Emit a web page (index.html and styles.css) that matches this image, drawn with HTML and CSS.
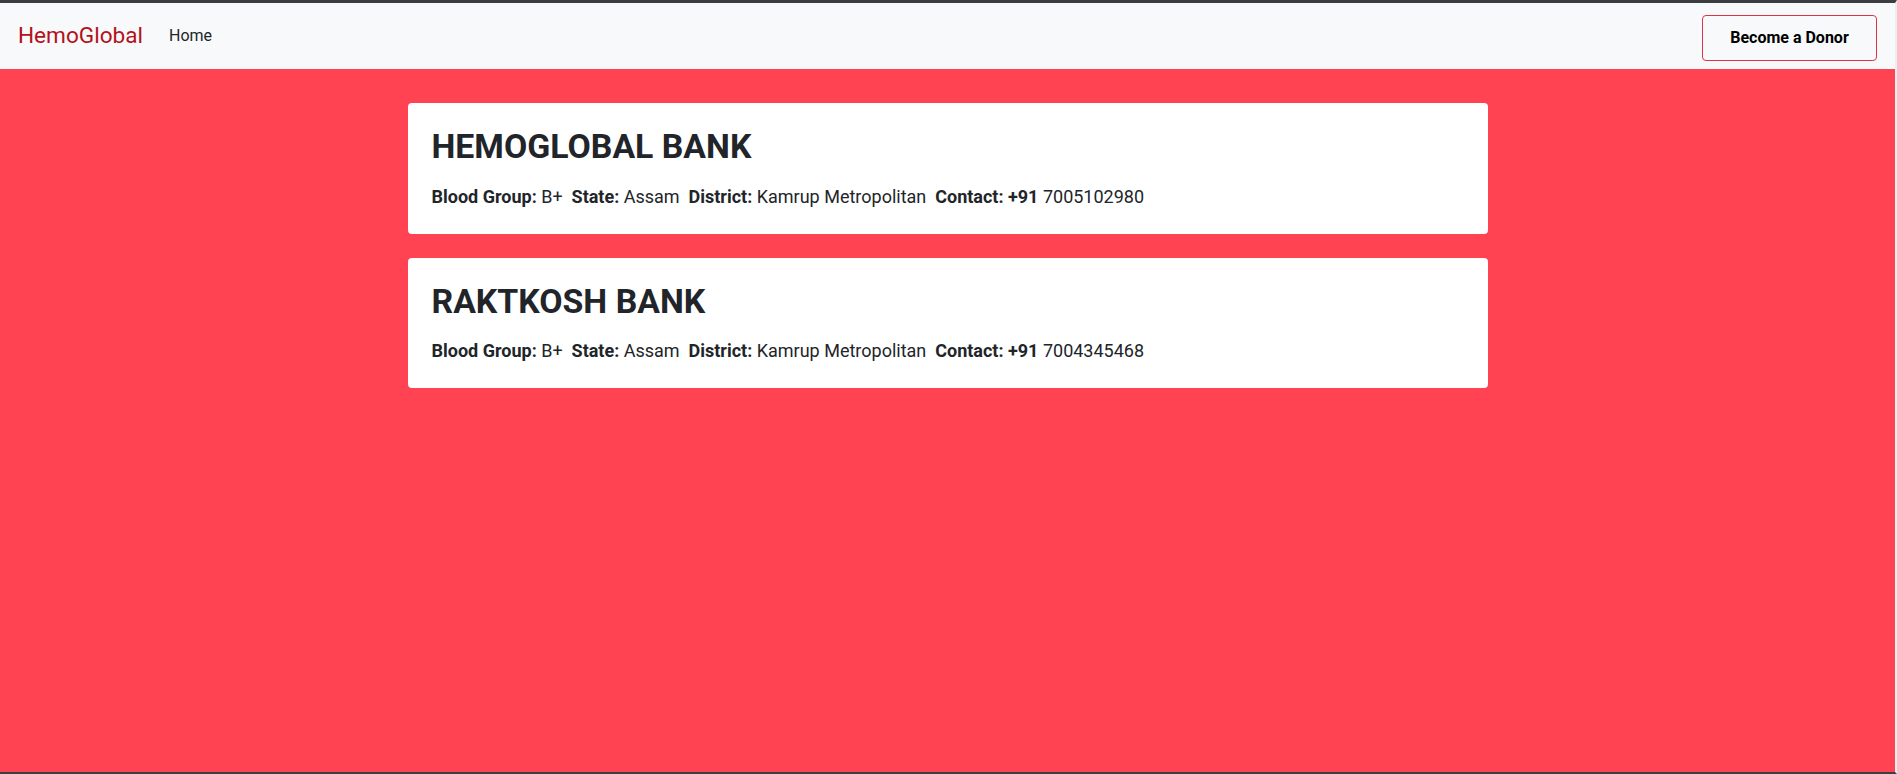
FILE: index.html
```html
<!DOCTYPE html>
<html lang="en">
<head>
<meta charset="utf-8">
<title>HemoGlobal</title>
<link rel="stylesheet" href="styles.css">
</head>
<body>
<div class="page">
  <nav class="navbar">
    <div class="nav-left">
      <a class="brand" href="#">HemoGlobal</a>
      <a class="nav-link" href="#">Home</a>
    </div>
    <button class="donor-btn" type="button">Become a Donor</button>
  </nav>
  <main class="main">
    <div class="list">
      <div class="card">
        <h1 class="card-title">HEMOGLOBAL BANK</h1>
        <p class="card-info"><b>Blood Group:</b> B+&nbsp; <b>State:</b> Assam&nbsp; <b>District:</b> Kamrup Metropolitan&nbsp; <b>Contact: +91</b> 7005102980</p>
      </div>
      <div class="card">
        <h1 class="card-title">RAKTKOSH BANK</h1>
        <p class="card-info"><b>Blood Group:</b> B+&nbsp; <b>State:</b> Assam&nbsp; <b>District:</b> Kamrup Metropolitan&nbsp; <b>Contact: +91</b> 7004345468</p>
      </div>
    </div>
  </main>
</div>
</body>
</html>
```
FILE: styles.css
```css
* { box-sizing: border-box; }
html, body {
  margin: 0;
  padding: 0;
  height: 100%;
}
body {
  font-family: Roboto, "Liberation Sans", Arial, sans-serif;
  color: #212529;
  background: #ff4352;
  overflow: hidden;
}
.page {
  height: 100vh;
  display: flex;
  flex-direction: column;
  border-top: 3px solid #3b3d40;
  border-bottom: 2px solid #3b3d40;
  border-right: 2px solid #eceef0;
}
.navbar {
  height: 66px;
  flex: none;
  background: #f8f9fa;
  display: flex;
  align-items: center;
  justify-content: space-between;
  padding: 0 18px 0 18px;
}
.nav-left {
  display: flex;
  align-items: center;
  gap: 26px;
}
.brand {
  font-size: 22.6px;
  color: #b3121c;
  text-decoration: none;
  line-height: 1.5;
}
.nav-link {
  font-size: 16px;
  color: #212529;
  text-decoration: none;
  line-height: 1.5;
  margin-top: 1px;
}
.donor-btn {
  width: 175px;
  height: 46px;
  margin-top: 3px;
  background: transparent;
  border: 1px solid #dc3545;
  border-radius: 4px;
  font-family: Roboto, "Liberation Sans", Arial, sans-serif;
  font-weight: 700;
  font-size: 16px;
  color: #000;
  cursor: pointer;
}
.main {
  flex: 1;
  background: #ff4352;
  padding-top: 34px;
}
.list {
  width: 1080px;
  margin: 0 auto;
  display: flex;
  flex-direction: column;
  gap: 24px;
}
.card {
  background: #fff;
  border-radius: 4px;
  padding: 24px 24px 24px;
}
.card-title {
  margin: 0 0 15px;
  font-size: 33.8px;
  font-weight: 700;
  line-height: 1.2;
  color: #212529;
}
.card-info {
  margin: 0;
  font-size: 18px;
  line-height: 1.5;
  color: #212529;
}
.card-info b {
  font-weight: 700;
}
```
